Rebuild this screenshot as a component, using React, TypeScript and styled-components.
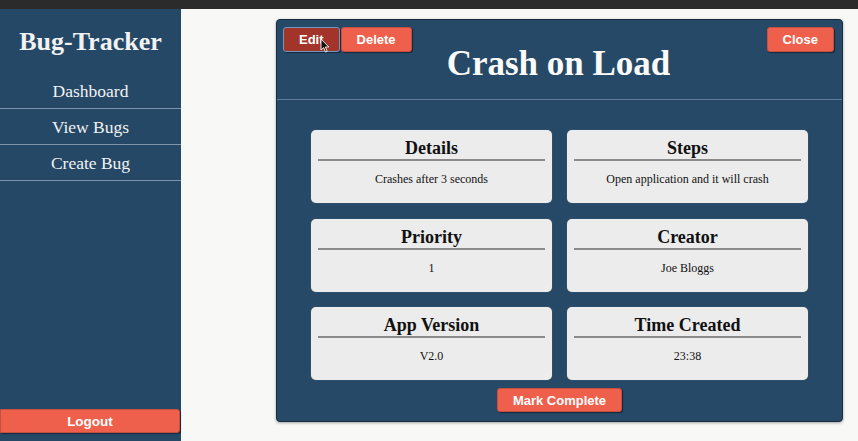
import React from "react";
import styled, { createGlobalStyle } from "styled-components";

const GlobalStyle = createGlobalStyle`
  html, body { margin: 0; padding: 0; }
  body { background: #f8f8f7; font-family: "Liberation Serif", "Times New Roman", serif; overflow: hidden; }
  * { box-sizing: border-box; }
`;

const Page = styled.div`
  width: 858px;
  height: 441px;
  display: flex;
  flex-direction: column;
`;

const TopBar = styled.div`
  height: 9px;
  background: #2b2b2b;
  flex: none;
`;

const Body = styled.div`
  flex: 1;
  display: flex;
  min-height: 0;
`;

const Sidebar = styled.aside`
  width: 181px;
  flex: none;
  background: #254867;
  display: flex;
  flex-direction: column;
  color: #f2f2f2;
  padding-bottom: 8px;
`;

const Brand = styled.h1`
  margin: 0;
  height: 64px;
  display: flex;
  align-items: center;
  justify-content: center;
  font-size: 26px;
  font-weight: bold;
  padding-top: 2px;
`;

const NavList = styled.nav`
  display: flex;
  flex-direction: column;
`;

const NavItem = styled.a`
  height: 36px;
  display: flex;
  align-items: center;
  justify-content: center;
  font-size: 17.5px;
  color: #f2f2f2;
  text-decoration: none;
  border-bottom: 1px solid #7f95aa;
  padding-top: 1px;
`;

const Spacer = styled.div`
  flex: 1;
`;

const ActionButton = styled.button<{ $variant?: "dark" | "light"; $wide?: boolean }>`
  height: ${(p) => (p.$wide ? "24px" : "25px")};
  padding: 0 15px;
  border: 1px solid ${(p) => (p.$variant === "dark" ? "#7296c4" : "#c65040")};
  border-radius: 3px;
  background: ${(p) => (p.$variant === "dark" ? "#a2342a" : "#ee604c")};
  color: #fff;
  font-family: "Liberation Sans", Arial, sans-serif;
  font-weight: bold;
  font-size: 13px;
  box-shadow: 1px 1px 1px rgba(0, 0, 0, 0.45);
  cursor: pointer;
  ${(p) => (p.$wide ? "width: 180px; border-radius: 0 3px 3px 0; font-size: 13.5px;" : "")}
`;

const Main = styled.main`
  flex: 1;
  padding: 10px 15px 19px 95px;
  display: flex;
`;

const Modal = styled.section`
  flex: 1;
  background: #264967;
  border: 1px solid #172c40;
  border-radius: 4px;
  box-shadow: 0 1px 3px rgba(0, 0, 0, 0.35);
  display: flex;
  flex-direction: column;
`;

const ModalHeader = styled.header`
  height: 80px;
  border-bottom: 1px solid #5f7c98;
  display: grid;
  grid-template-columns: 1fr auto 1fr;
  align-items: start;
  padding: 7px 8px 0 6px;
`;

const ButtonGroup = styled.div<{ $end?: boolean }>`
  display: flex;
  justify-content: ${(p) => (p.$end ? "flex-end" : "flex-start")};
  position: relative;
  gap: 1px;
`;

const ModalTitle = styled.h2`
  margin: 0;
  padding-top: 17px;
  line-height: 40px;
  font-size: 35px;
  font-weight: bold;
  color: #fbfbfb;
  white-space: nowrap;
`;

const Cursor = styled.svg`
  position: absolute;
  left: 37px;
  top: 11px;
  width: 10px;
  height: 15px;
  pointer-events: none;
`;

const CardGrid = styled.div`
  display: grid;
  grid-template-columns: 241px 241px;
  grid-auto-rows: 73px;
  column-gap: 15px;
  row-gap: 15.5px;
  justify-content: center;
  padding-top: 30px;
`;

const Card = styled.div`
  background: #ececec;
  border-radius: 5px;
  padding: 7px 7px 6px;
  text-align: center;
  color: #111;
  box-shadow: 0 0 1px rgba(255, 255, 255, 0.4);
`;

const CardTitle = styled.h3`
  margin: 0;
  font-size: 18px;
  line-height: 22px;
  font-weight: bold;
  border-bottom: 2px solid #8a8a8a;
`;

const CardText = styled.p`
  margin: 11px 0 0;
  font-size: 12px;
  line-height: 14px;
`;

const Footer = styled.div`
  display: flex;
  justify-content: center;
  padding-top: 8px;
`;

const fields = [
  ["Details", "Crashes after 3 seconds"],
  ["Steps", "Open application and it will crash"],
  ["Priority", "1"],
  ["Creator", "Joe Bloggs"],
  ["App Version", "V2.0"],
  ["Time Created", "23:38"],
];

export default function App() {
  return (
    <>
      <GlobalStyle />
      <Page>
        <TopBar />
        <Body>
          <Sidebar>
            <Brand>Bug-Tracker</Brand>
            <NavList>
              <NavItem>Dashboard</NavItem>
              <NavItem>View Bugs</NavItem>
              <NavItem>Create Bug</NavItem>
            </NavList>
            <Spacer />
            <ActionButton $wide>Logout</ActionButton>
          </Sidebar>
          <Main>
            <Modal>
              <ModalHeader>
                <ButtonGroup>
                  <ActionButton $variant="dark">Edit</ActionButton>
                  <ActionButton>Delete</ActionButton>
                  <Cursor viewBox="0 0 10 15">
                    <path d="M1 1 L1 12 L3.6 9.6 L5.6 14 L7.2 13.3 L5.3 9 L8.8 9 Z" fill="#111" stroke="#fff" strokeWidth="0.9" />
                  </Cursor>
                </ButtonGroup>
                <ModalTitle>Crash on Load</ModalTitle>
                <ButtonGroup $end>
                  <ActionButton>Close</ActionButton>
                </ButtonGroup>
              </ModalHeader>
              <CardGrid>
                {fields.map(([t, v]) => (
                  <Card key={t}>
                    <CardTitle>{t}</CardTitle>
                    <CardText>{v}</CardText>
                  </Card>
                ))}
              </CardGrid>
              <Footer>
                <ActionButton style={{ height: 24 }}>Mark Complete</ActionButton>
              </Footer>
            </Modal>
          </Main>
        </Body>
      </Page>
    </>
  );
}
